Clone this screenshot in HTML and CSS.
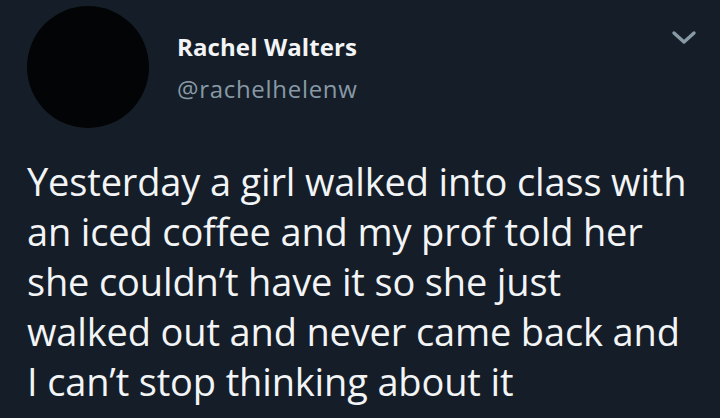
FILE: index.html
```html
<!DOCTYPE html>
<html>
<head>
<meta charset="utf-8">
<link rel="stylesheet" href="styles.css">
</head>
<body>
<div class="tweet">
  <div class="header">
    <div class="avatar"></div>
    <div class="names">
      <div class="name">Rachel Walters</div>
      <div class="handle">@rachelhelenw</div>
    </div>
    <svg class="chev" width="26" height="16" viewBox="0 0 26 16"><path d="M3 3 L13 12 L23 3" fill="none" stroke="#8899a6" stroke-width="3.4" stroke-linecap="round" stroke-linejoin="round"/></svg>
  </div>
  <div class="text">Yesterday a girl walked into class with<br>an iced coffee and my prof told her<br>she couldn’t have it so she just<br>walked out and never came back and<br>I can’t stop thinking about it</div>
</div>
</body>
</html>
```
FILE: styles.css
```css
html, body {
  margin: 0;
  padding: 0;
  background: #151e28;
}
.tweet {
  width: 720px;
  height: 418px;
  box-sizing: border-box;
  padding: 6px 0 0 27px;
  font-family: "Open Sans", "Noto Sans", sans-serif;
  color: #f2f4f6;
}
.header {
  display: flex;
  align-items: flex-start;
}
.avatar {
  width: 122px;
  height: 122px;
  border-radius: 50%;
  background: #030405;
  flex: none;
}
.names {
  margin-left: 28px;
  margin-top: 26px;
  flex: 1;
}
.name {
  font-weight: 700;
  font-size: 24px;
  line-height: 30px;
  letter-spacing: 0.1px;
}
.handle {
  color: #8899a6;
  font-size: 24px;
  line-height: 30px;
  margin-top: 12px;
  letter-spacing: 0.7px;
}
.chev {
  margin-top: 24px;
  margin-right: 23px;
}
.text {
  margin-top: 28px;
  font-size: 38px;
  line-height: 50px;
  letter-spacing: -0.15px;
  white-space: nowrap;
}
```
